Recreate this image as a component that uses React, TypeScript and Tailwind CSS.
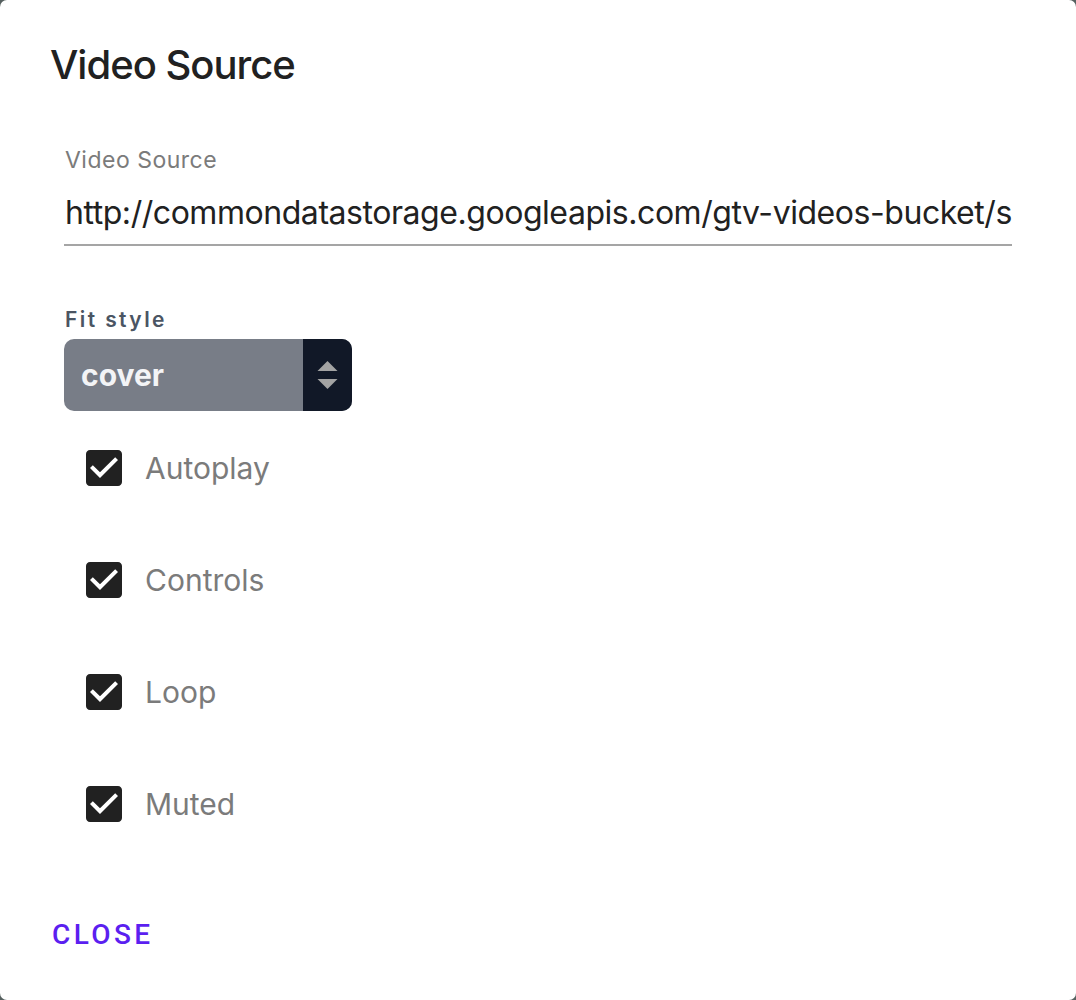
import React, { useState } from "react";

const options = [
  { key: "autoplay", label: "Autoplay" },
  { key: "controls", label: "Controls" },
  { key: "loop", label: "Loop" },
  { key: "muted", label: "Muted" },
];

// material "check_box" glyph, box is 18/24 of the viewBox
function CheckBox({ checked }: { checked: boolean }) {
  return (
    <svg viewBox="0 0 24 24" className="h-[48px] w-[48px]">
      {checked ? (
        <path
          fill="#212121"
          d="M19 3H5c-1.11 0-2 .9-2 2v14c0 1.1.89 2 2 2h14c1.11 0 2-.9 2-2V5c0-1.1-.89-2-2-2zm-9 14l-5-5 1.41-1.41L10 14.17l7.59-7.59L19 8l-9 9z"
        />
      ) : (
        <path
          fill="#757575"
          d="M19 5v14H5V5h14m0-2H5c-1.1 0-2 .9-2 2v14c0 1.1.9 2 2 2h14c1.1 0 2-.9 2-2V5c0-1.1-.9-2-2-2z"
        />
      )}
    </svg>
  );
}

export default function App() {
  const [checks, setChecks] = useState<Record<string, boolean>>({
    autoplay: true,
    controls: true,
    loop: true,
    muted: true,
  });

  return (
    <div className="min-h-screen bg-[#56605f] font-['Inter',sans-serif]">
      <div className="flex h-[1000px] flex-col rounded-[7px] bg-white">
        <h2 className="pl-[50px] pt-[41px] text-[40px] leading-[48px] font-medium tracking-[-1px] text-[#212121]">
          Video Source
        </h2>

        <div className="ml-[64px] mr-[64px] mt-[58px] flex flex-col">
          <label className="pl-[1px] text-[23px] leading-[26px] tracking-[0.5px] text-[#7b7b7b]">
            Video Source
          </label>
          <div className="mt-[21px] border-b-2 border-[#a5a5a5] pb-[12px]">
            <input
              readOnly
              value="http://commondatastorage.googleapis.com/gtv-videos-bucket/sample/BigBuckBunny.mp4"
              className="block h-[38px] w-full bg-transparent pl-[1px] text-[32px] leading-[38px] tracking-[-0.45px] text-[#212121] outline-none"
            />
          </div>
        </div>

        <div className="ml-[64px] mt-[61px] flex flex-col">
          <span className="pl-[1px] text-[21px] leading-[26px] font-semibold tracking-[2.4px] text-[#4b5563]">
            Fit style
          </span>
          <div className="mt-[6px] flex h-[72px] w-[288px] overflow-hidden rounded-[10px] bg-[#787d87]">
            <span className="flex flex-1 items-center pl-[17px] text-[30px] font-bold text-[#f3f4f6]">
              cover
            </span>
            <span className="flex w-[49px] flex-col items-center justify-center gap-[8px] bg-[#111827]">
              <svg viewBox="0 0 20 10" className="h-[10px] w-[21px]">
                <path d="M0 10L10 0L20 10Z" fill="#a3a3a3" />
              </svg>
              <svg viewBox="0 0 20 10" className="h-[10px] w-[21px]">
                <path d="M0 0L20 0L10 10Z" fill="#a3a3a3" />
              </svg>
            </span>
          </div>
        </div>

        <div className="ml-[80px] mt-[1px] flex flex-col">
          {options.map((o) => (
            <label
              key={o.key}
              onClick={() => setChecks((c) => ({ ...c, [o.key]: !c[o.key] }))}
              className="flex h-[112px] cursor-pointer items-center gap-[17px]"
            >
              <CheckBox checked={checks[o.key]} />
              <span className="text-[30px] leading-[36px] text-[#7b7b7b]">{o.label}</span>
            </label>
          ))}
        </div>

        <div className="mt-auto pb-[49px] pl-[52px] font-['Roboto',sans-serif]">
          <button className="text-[28px] leading-[32px] font-medium tracking-[3.4px] text-[#5b1ff0]">
            CLOSE
          </button>
        </div>
      </div>
    </div>
  );
}
